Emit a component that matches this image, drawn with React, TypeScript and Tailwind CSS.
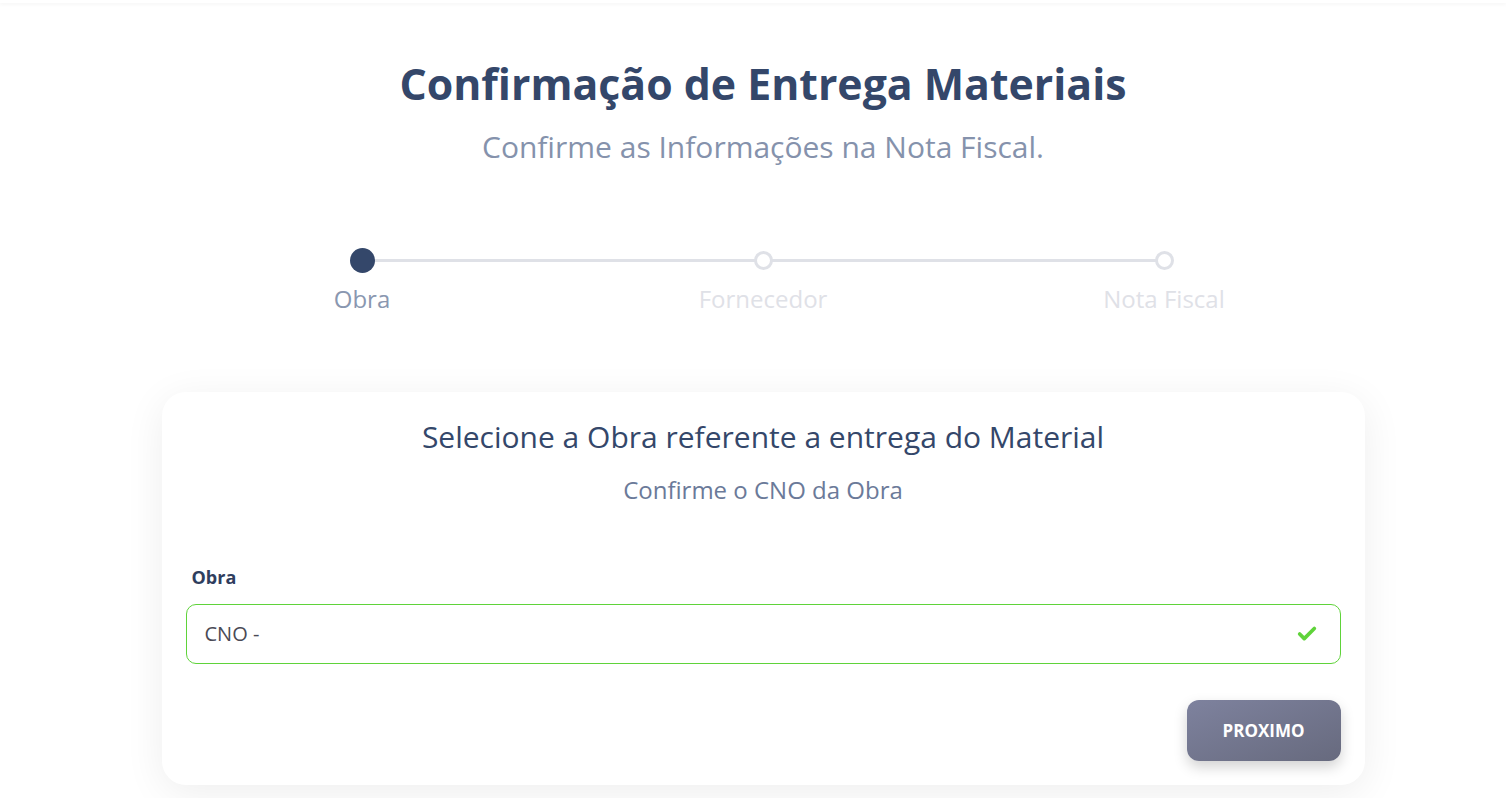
import { Check } from "lucide-react";

const steps = [
  { label: "Obra", active: true },
  { label: "Fornecedor", active: false },
  { label: "Nota Fiscal", active: false },
];

export default function App() {
  return (
    <div className="h-[798px] bg-white font-['Open_Sans',sans-serif] overflow-hidden pl-[20px]">
      {/* top bar shadow */}
      <div className="h-[3px] -ml-[20px] bg-white shadow-[0_1px_4px_rgba(0,0,0,0.06)]" />

      <div className="flex flex-col items-center pt-[52px]">
        <h1 className="text-[42.8px] leading-[58px] font-bold text-[#34476a]">
          Confirmação de Entrega Materiais
        </h1>
        <p className="mt-[14px] text-[30px] leading-[40px] text-[#8592ac]">
          Confirme as Informações na Nota Fiscal.
        </p>
      </div>

      {/* Stepper */}
      <div className="mt-[81px] flex justify-center">
        <div className="relative w-[802px]">
          <div className="absolute left-0 right-0 top-[11px] h-[3px] bg-[#dfe1e7]" />
          <div className="relative flex justify-between">
            {steps.map((step) => (
              <div key={step.label} className="w-0 flex flex-col items-center">
                <div className="h-[25px] flex items-center justify-center">
                  {step.active ? (
                    <div className="w-[25px] h-[25px] rounded-full bg-[#34476a]" />
                  ) : (
                    <div className="w-[19px] h-[19px] rounded-full border-[3px] border-[#dfe1e7] bg-white" />
                  )}
                </div>
                <span
                  className={`mt-[10px] whitespace-nowrap text-[24px] leading-[32px] ${
                    step.active ? "text-[#8a97b0]" : "text-[#dfe1e7]"
                  }`}
                >
                  {step.label}
                </span>
              </div>
            ))}
          </div>
        </div>
      </div>

      {/* Card */}
      <div className="mt-[77px] flex justify-center">
        <div className="w-[1203px] h-[393px] bg-white rounded-[24px] shadow-[0_8px_40px_rgba(0,0,0,0.07)] px-[24px] pt-[25px]">
          <h2 className="text-center text-[30px] leading-[40px] text-[#34476a]">
            Selecione a Obra referente a entrega do Material
          </h2>
          <p className="mt-[17px] text-center text-[24px] leading-[32px] text-[#6b7a99]">
            Confirme o CNO da Obra
          </p>

          <label className="block mt-[59px] ml-[6px] text-[18px] leading-[24px] font-bold text-[#2f3e5e]">
            Obra
          </label>
          <div className="mt-[15px] h-[60px] rounded-[10px] border border-[#5fd33a] flex items-center justify-between pl-[18px] pr-[22px]">
            <span className="text-[20px] text-[#4a4a55]">CNO -</span>
            <Check className="w-[22px] h-[22px] text-[#5fd33a]" strokeWidth={4} />
          </div>

          <div className="mt-[36px] flex justify-end">
            <button className="w-[154px] h-[61px] rounded-[12px] bg-gradient-to-br from-[#7e829e] to-[#676a7e] text-white font-bold text-[17px] shadow-[0_6px_14px_rgba(0,0,0,0.18)]">
              PROXIMO
            </button>
          </div>
        </div>
      </div>
    </div>
  );
}
